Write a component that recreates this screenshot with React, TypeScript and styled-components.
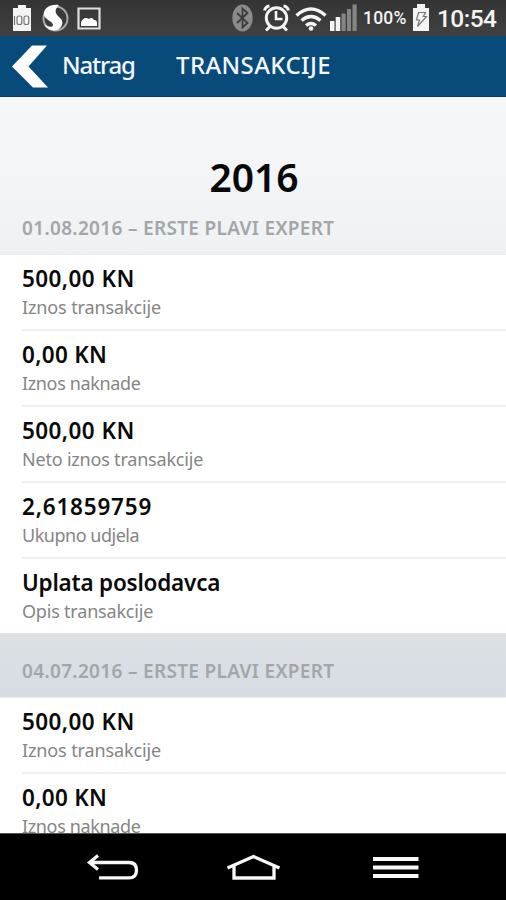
import React from "react";
import styled, { createGlobalStyle } from "styled-components";

const GlobalStyle = createGlobalStyle`
  * { box-sizing: border-box; }
  html, body { margin: 0; padding: 0; overflow: hidden; }
  body { font-family: "Noto Sans", "Open Sans", sans-serif; background: #fff; }
`;

const Screen = styled.div`
  display: flex;
  flex-direction: column;
  width: 506px;
  height: 900px;
  overflow: hidden;
  background: #fff;
`;

const StatusBar = styled.header`
  flex: none;
  display: flex;
  justify-content: space-between;
  height: 36px;
  background: linear-gradient(#343434, #414141);
  color: #f4f4f4;
`;

const StatusIcons = styled.svg`
  display: block;
  height: 36px;
`;

const StatusRight = styled.div`
  display: flex;
  align-items: center;
`;

const BatteryLevel = styled.span`
  width: 50px;
  margin-left: 2px;
  font: 500 17.5px/36px Roboto, sans-serif;
  letter-spacing: 0.2px;
  white-space: nowrap;
`;

const Clock = styled.span`
  width: 69px;
  padding-top: 1px;
  font: 500 24.5px/36px Roboto, sans-serif;
  letter-spacing: -0.55px;
  white-space: nowrap;
`;

const TitleBar = styled.div`
  flex: none;
  display: flex;
  align-items: center;
  height: 61px;
  padding-left: 12px;
  border-bottom: 1px solid #063c66;
  background: #084b7a;
  color: #f3f7fb;
  font-size: 24px;
  line-height: 32px;
`;

const BackArrow = styled.svg`
  flex: none;
  width: 37px;
  height: 43px;
`;

const BackLabel = styled.span`
  width: 114px;
  margin: 0 0 2px 13px;
  letter-spacing: -1.2px;
  font-weight: 500;
`;

const Title = styled.span`
  margin-bottom: 2px;
  letter-spacing: 0.4px;
  font-weight: 500;
`;

const Content = styled.main`
  flex: 1;
  min-height: 0;
  overflow: hidden;
`;

const YearPanel = styled.section`
  height: 158px;
  padding-top: 53px;
  border-bottom: 1px solid #e9edef;
  background: linear-gradient(#f6f7f9, #f2f4f6 60%, #eff2f3);
`;

const Year = styled.h1`
  margin: 0;
  padding-left: 2px;
  text-align: center;
  font-size: 39px;
  font-weight: 600;
  line-height: 54px;
  color: #080808;
`;

const SectionTitle = styled.h2`
  margin: 0;
  padding-left: 22px;
  font-size: 19px;
  font-weight: 600;
  line-height: 26px;
  letter-spacing: 0.32px;
  color: #a3a6a9;
  white-space: nowrap;
`;

const YearSection = styled.div`
  margin-top: 11px;
`;

const SectionBand = styled.section`
  height: 65px;
  padding-top: 25px;
  border-bottom: 1px solid #eceff2;
  background: linear-gradient(#dbe1e5, #d6dce2);
`;

const Rows = styled.div`
  display: flex;
  flex-direction: column;
`;

const Row = styled.div`
  height: 76px;
  margin-left: 22px;
  padding-top: 9px;
  border-bottom: 2px solid #f0f0f0;

  &:last-child {
    height: 74px;
    border-bottom: 0;
  }
`;

const Value = styled.div<{ $tracking: number }>`
  font-size: 22.5px;
  font-weight: 600;
  line-height: 30px;
  letter-spacing: ${(p) => p.$tracking}px;
  color: #0a0a0a;
  white-space: nowrap;
`;

const Caption = styled.div<{ $tracking: number }>`
  margin-top: 1px;
  font-size: 18px;
  line-height: 24px;
  letter-spacing: ${(p) => p.$tracking}px;
  color: #858585;
  white-space: nowrap;
`;

const NavBar = styled.nav`
  flex: none;
  height: 67px;
  border-top: 1px solid #555;
  background: #000;
`;

const NavIcons = styled.svg`
  display: block;
  width: 506px;
  height: 66px;
`;

type Entry = { value: string; caption: string; vt: number; ct: number };

const august: Entry[] = [
  { value: "500,00 KN", caption: "Iznos transakcije", vt: 0.42, ct: -0.12 },
  { value: "0,00 KN", caption: "Iznos naknade", vt: 0.3, ct: -0.36 },
  { value: "500,00 KN", caption: "Neto iznos transakcije", vt: 0.42, ct: -0.2 },
  { value: "2,61859759", caption: "Ukupno udjela", vt: 0.8, ct: -0.48 },
  { value: "Uplata poslodavca", caption: "Opis transakcije", vt: -0.22, ct: -0.2 },
];

const july: Entry[] = [august[0], august[1]];

function Entries({ items }: { items: Entry[] }) {
  return (
    <Rows>
      {items.map((e, i) => (
        <Row key={i}>
          <Value $tracking={e.vt}>{e.value}</Value>
          <Caption $tracking={e.ct}>{e.caption}</Caption>
        </Row>
      ))}
    </Rows>
  );
}

function NotificationIcons() {
  return (
    <StatusIcons width="110" viewBox="0 0 110 36" aria-hidden="true">
      <path d="M18 5h8v3h5v23H13V8h5z" fill="#f4f4f4" />
      <g fill="#f4f4f4" stroke="#777" strokeWidth="1.2">
        <path d="M14.5 16v9" />
        <rect x="17" y="16" width="4.8" height="8.5" rx="2" />
        <rect x="24" y="16" width="4.8" height="8.5" rx="2" />
      </g>
      <circle cx="55.5" cy="18.5" r="12" fill="none" stroke="#aaa" strokeWidth="2" />
      <path d="M59 5C49 4 43 9 44 15c1 5 9 6 9 10 0 3-6 2-9-1 3 6 10 8 15 5 5-4 4-9 0-12-4-4-5-7 0-12z" fill="#fff" />
      <path d="M78.5 8.5h21v20h-21z" fill="none" stroke="#e0e0e0" strokeWidth="2.2" />
      <path d="M81 26v-4c2-4 5-5 8-3 2-2 4-1 5 1 2 0 3 1 3 3v3z" fill="#fff" />
    </StatusIcons>
  );
}

function SystemIcons() {
  return (
    <StatusIcons width="130" viewBox="230 0 130 36" aria-hidden="true">
      <ellipse cx="241.5" cy="18" rx="10.2" ry="13.5" fill="#8b8b8b" />
      <path d="M236 13l10.5 10-5 4.5v-19l5 4.5-10.5 10" fill="none" stroke="#3c3c3c" strokeWidth="1.8" />
      <g transform="translate(-1 0)">
        <g fill="none" stroke="#f4f4f4">
          <circle cx="276.5" cy="18" r="10.2" strokeWidth="3" />
          <path d="M276 11v8h6.5" strokeWidth="2.6" />
          <path d="M264.5 10.5q1-4 5-4.5M288.5 10.5q-1-4-5-4.5M270 26.5l-4 4M283 26.5l4 4" strokeWidth="3" />
        </g>
        <g fill="none" stroke="#f4f4f4" strokeWidth="3.4">
          <path d="M296.5 15.5q14.5-13 29 0" />
          <path d="M301.5 20.5q9.5-8 19 0" />
          <path d="M306 25.5q5-3.8 10 0" />
        </g>
        <circle cx="311" cy="28.5" r="2.3" fill="#f4f4f4" />
        <path d="M330 21h4.5v10h-4.5zM335.7 17h4.5v14h-4.5z" fill="#f4f4f4" />
        <path d="M341.5 13.5h4.2V31h-4.2zM347 9h4v22h-4zM352.5 4.5h4.2V31h-4.2z" fill="#858585" />
      </g>
    </StatusIcons>
  );
}

export default function App() {
  return (
    <Screen>
      <GlobalStyle />
      <StatusBar>
        <NotificationIcons />
        <StatusRight>
          <SystemIcons />
          <BatteryLevel>100%</BatteryLevel>
          <StatusIcons width="24" viewBox="413 0 24 36" aria-hidden="true">
            <path d="M417 4h8v4h4v23h-16V8h4z" fill="#f4f4f4" />
            <path d="M418.5 12.5h7l-2.2 4h3.2l-9 10 2-6.500h-3z" fill="none" stroke="#777" strokeWidth="1.2" />
          </StatusIcons>
          <Clock>10:54</Clock>
        </StatusRight>
      </StatusBar>
      <TitleBar>
        <BackArrow viewBox="0 0 37 43" aria-hidden="true">
          <path d="M20 0.5h15L16.5 21.5 36 42.5H21L0 21.5z" fill="#fff" />
        </BackArrow>
        <BackLabel>Natrag</BackLabel>
        <Title>TRANSAKCIJE</Title>
      </TitleBar>
      <Content>
        <YearPanel>
          <Year>2016</Year>
          <YearSection>
            <SectionTitle>01.08.2016 – ERSTE PLAVI EXPERT</SectionTitle>
          </YearSection>
        </YearPanel>
        <Entries items={august} />
        <SectionBand>
          <SectionTitle>04.07.2016 – ERSTE PLAVI EXPERT</SectionTitle>
        </SectionBand>
        <Entries items={july} />
      </Content>
      <NavBar>
        <NavIcons viewBox="0 834 506 66" aria-hidden="true">
          <g fill="none" stroke="#f8f8f8" strokeWidth="3.3">
            <path d="M98 855.5l-8.5 7 8.5 7M89 862.5h40q7.500 0 7.500 7.700t-7.500 7.700H99" />
            <path d="M227.500 868l26-11.500 26 11.500M234 866v12h40v-12" />
            <path d="M373 859h45.500M373 867.500h45.500M373 876h45.500" strokeWidth="3.8" />
          </g>
        </NavIcons>
      </NavBar>
    </Screen>
  );
}
